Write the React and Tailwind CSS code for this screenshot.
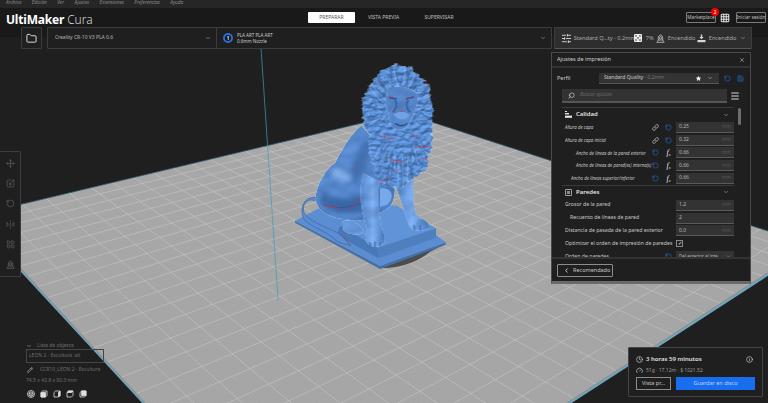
import { ChevronDown, ChevronLeft, Clock, Folder, Grid3x3, Info, Link, Menu, Move, Pencil, RotateCcw, Save, Search, SlidersHorizontal, Star, X, Scaling, FlipHorizontal2, LayoutGrid, Gauge } from 'lucide-react';

const PLATE = { a: [404, 113], r: [811, 245], b: [303, 574], l: [-28, 216] };
const MANE = 'M340 30C380 25 420 50 440 90C455 130 462 170 455 210C467 250 447 300 442 340C420 360 392 372 370 396C340 398 312 388 295 378C280 330 262 280 265 240C240 200 245 130 265 100C280 70 292 50 340 30Z';

const makeMapper = (p0, p1, p2, p3) => {
  const dx1 = p1[0] - p2[0];
  const dx2 = p3[0] - p2[0];
  const sx = p0[0] - p1[0] + p2[0] - p3[0];
  const dy1 = p1[1] - p2[1];
  const dy2 = p3[1] - p2[1];
  const sy = p0[1] - p1[1] + p2[1] - p3[1];
  const den = dx1 * dy2 - dx2 * dy1;
  const g = (sx * dy2 - dx2 * sy) / den;
  const h = (dx1 * sy - sx * dy1) / den;
  const a = p1[0] - p0[0] + g * p1[0];
  const b = p3[0] - p0[0] + h * p3[0];
  const d = p1[1] - p0[1] + g * p1[1];
  const e = p3[1] - p0[1] + h * p3[1];
  return (u, v) => {
    const w = g * u + h * v + 1;
    return [(a * u + b * v + p0[0]) / w, (d * u + e * v + p0[1]) / w];
  };
};

const mapPlate = makeMapper(PLATE.l, PLATE.a, PLATE.r, PLATE.b);

const gridLines = (count) => {
  const lines = [];
  for (let i = 1; i < count; i++) {
    const t = i / count;
    const a1 = mapPlate(t, 0);
    const a2 = mapPlate(t, 1);
    const b1 = mapPlate(0, t);
    const b2 = mapPlate(1, t);
    lines.push(`M${a1[0].toFixed(1)} ${a1[1].toFixed(1)}L${a2[0].toFixed(1)} ${a2[1].toFixed(1)}`);
    lines.push(`M${b1[0].toFixed(1)} ${b1[1].toFixed(1)}L${b2[0].toFixed(1)} ${b2[1].toFixed(1)}`);
  }
  return lines.join('');
};

// strands of the mane, fanned out from behind the face
const maneStrands = (step, phase) => {
  const parts = [];
  for (let a = phase; a < 360; a += step) {
    const rad = (a * Math.PI) / 180;
    const wob = Math.sin(a * 7.3) * 0.18;
    const r1 = 62 + Math.sin(a * 3.1) * 8;
    const r2 = 112 + Math.sin(a * 5.7) * 30;
    const cy = a > 20 && a < 160 ? 215 : 165;
    const sy = a > 20 && a < 160 ? 1.5 : 1.15;
    const x1 = 362 + Math.cos(rad) * r1;
    const y1 = cy + Math.sin(rad) * r1 * sy;
    const x2 = 362 + Math.cos(rad + wob) * r2 * 0.85;
    const y2 = cy + Math.sin(rad + wob) * r2 * sy;
    const cx = (x1 + x2) / 2 + wob * 30;
    const cyy = (y1 + y2) / 2 + 8;
    parts.push(`M${x1.toFixed(0)} ${y1.toFixed(0)}Q${cx.toFixed(0)} ${cyy.toFixed(0)} ${x2.toFixed(0)} ${y2.toFixed(0)}`);
  }
  return parts.join('');
};

function SurfaceFilter({ id, freq, octaves = 3, seed, height, shift = 0, spec = 0.35 }) {
  return (
    <filter id={id} x="-0.1" y="-0.1" width="1.2" height="1.2" colorInterpolationFilters="sRGB">
      <feTurbulence type="fractalNoise" baseFrequency={freq} numOctaves={octaves} seed={seed} result="n" />
      <feDisplacementMap in="SourceGraphic" in2="n" scale={shift} xChannelSelector="R" yChannelSelector="G" result="d" />
      <feDiffuseLighting in="n" surfaceScale={height} diffuseConstant="1.12" lightingColor="#ffffff" result="l">
        <feDistantLight azimuth="250" elevation="60" />
      </feDiffuseLighting>
      <feBlend in="l" in2="d" mode="multiply" result="m" />
      <feSpecularLighting in="n" surfaceScale={height} specularConstant={spec} specularExponent="30" lightingColor="#cfe2ff" result="s">
        <feDistantLight azimuth="250" elevation="60" />
      </feSpecularLighting>
      <feComposite in="m" in2="s" operator="arithmetic" k1="0" k2="1" k3="0.6" k4="0" result="lit" />
      <feComposite in="lit" in2="d" operator="in" />
    </filter>
  );
}

function Lion() {
  return (
    <g transform="translate(280 55) scale(0.3333)">
      <path d="M300 640C350 640 410 625 450 590L497 566L300 640Z" fill="#4c4c4c" />
      <path d="M45 497L300 632L497 562L497 569L300 642L45 503Z" fill="#4470ab" />
      <path d="M45 497L132 452L350 452L497 562L300 632Z" fill="#5a8dd2" />
      <path d="M292 578L468 520L468 548L296 610Z" fill="#4f7fbf" />
      <path d="M132 450L350 452L468 520L292 578Z" fill="#5f94d8" />
      <path d="M180 512L292 578L296 610L170 540Z" fill="#4878b8" />
      <path d="M122 448C88 418 64 445 72 472C84 498 130 512 170 532C186 540 196 556 212 572C196 566 176 566 168 556C140 528 84 512 72 492C54 458 78 412 122 432Z" fill="#5a8dd4" stroke="#3a659f" strokeWidth="2" />

      <g filter="url(#bump)">
        <path d="M245 210C205 245 180 295 165 325C130 345 112 390 105 432C112 468 150 492 200 492C240 510 290 480 330 455C360 420 340 330 300 280Z" fill="url(#bodyShade)" />
        <path d="M188 500C210 488 240 505 252 530C240 545 205 540 190 525Z" fill="#6497dc" />
      </g>
      <g filter="url(#soft)">
        <path d="M255 260C225 300 210 340 222 385C250 350 268 310 275 270Z" fill="#36609c" opacity="0.6" />
        <path d="M125 405C160 440 215 440 262 420L250 470C200 480 150 470 120 440Z" fill="#2f5793" opacity="0.6" />
        <path d="M150 345C175 335 205 350 215 375C190 385 165 375 150 345Z" fill="#9cc3f5" opacity="0.6" />
      </g>
      <path d="M128 448C165 462 205 462 250 442" fill="none" stroke="#2b4f88" strokeWidth="3" opacity="0.5" />
      <path d="M300 400C340 395 345 430 320 450L300 455Z" fill="#76a8ea" />
      <g filter="url(#bump)">
        <path d="M250 355C240 400 235 440 262 525C250 545 255 572 285 576C315 575 325 555 305 520C296 470 288 430 298 380Z" fill="url(#legShade)" />
        <path d="M345 385C360 430 372 470 388 512C395 530 430 532 448 518C450 500 425 490 408 478C398 440 400 410 400 375Z" fill="url(#legShade)" />
      </g>
      <path d="M268 562L272 574M285 560L285 576M300 560L300 573M402 510L404 526M420 510L422 528" stroke="#35609c" strokeWidth="3" />

      <path d={MANE} fill="#5286cc" filter="url(#mane)" />
      <g clipPath="url(#maneClip)">
        <path d={maneStrands(9, 0)} stroke="#2f5894" strokeWidth="5" fill="none" strokeLinecap="round" opacity="0.5" />
        <path d={maneStrands(13, 5)} stroke="#a9cbf7" strokeWidth="2.5" fill="none" strokeLinecap="round" opacity="0.6" />
      </g>

      <path d="M325 100C350 88 395 95 412 118C420 150 395 190 385 210C378 226 345 228 335 212C325 190 310 140 325 100Z" fill="#5283c8" filter="url(#bump)" />
      <path d="M345 135C355 150 345 165 338 172M385 135C375 150 382 165 392 172" fill="none" stroke="#36609c" strokeWidth="5" />
      <path d="M328 128L350 132M378 132L402 126" stroke="#2c538e" strokeWidth="5" />
      <path d="M340 178C355 166 378 168 388 180C382 198 350 198 340 178Z" fill="#6fa2e6" />
      <path d="M345 205C358 214 372 214 382 205" fill="none" stroke="#2a4f8a" strokeWidth="4" />
      <path d="M295 85L300 90M325 125L340 128M385 130L398 128M342 172L352 170M362 170L375 166M300 245L340 252M395 245L412 242M405 278L445 275M330 315L370 318M340 345L352 350M300 378L330 372M130 452L180 460M205 468L245 428M440 85L445 90M425 310L440 315M215 340L222 348" stroke="#e03040" strokeWidth="3" fill="none" strokeDasharray="7 4" />
      <path d="M185 540L215 572" stroke="#e03040" strokeWidth="1.5" fill="none" />
    </g>
  );
}

function Scene() {
  return (
    <svg className="absolute inset-0" width="768" height="403" viewBox="0 0 768 403">
      <defs>
        <clipPath id="plateClip">
          <polygon points={`${PLATE.l} ${PLATE.a} ${PLATE.r} ${PLATE.b}`} />
        </clipPath>
        <clipPath id="maneClip">
          <path d={MANE} />
        </clipPath>
        <linearGradient id="bodyShade" x1="0" y1="0" x2="1" y2="1">
          <stop offset="0" stopColor="#5d90d8" />
          <stop offset="1" stopColor="#4577bb" />
        </linearGradient>
        <linearGradient id="legShade" x1="0" y1="0" x2="1" y2="0">
          <stop offset="0" stopColor="#4f82c8" />
          <stop offset="0.5" stopColor="#78aaee" />
          <stop offset="1" stopColor="#4375b8" />
        </linearGradient>
        <SurfaceFilter id="mane" freq="0.05 0.07" octaves={3} seed={5} height={3} shift={22} spec={0.25} />
        <SurfaceFilter id="bump" freq="0.02" octaves={2} seed={8} height={2.5} shift={5} spec={0.12} />
        <filter id="soft" x="-0.2" y="-0.2" width="1.4" height="1.4">
          <feGaussianBlur stdDeviation="7" />
        </filter>
      </defs>

      <polygon points={`${PLATE.l} ${PLATE.r} 811 248 303 577 -28 219`} fill="#6fa6bd" />
      <polygon points={`${PLATE.l} ${PLATE.a} ${PLATE.r} ${PLATE.b}`} fill="#a5a5a5" />
      <g clipPath="url(#plateClip)">
        <path d={gridLines(240)} stroke="#b2b2b2" strokeWidth="0.3" opacity="0.55" fill="none" />
        <path d={gridLines(24)} stroke="#c2c2c2" strokeWidth="0.7" fill="none" />
      </g>
      <path d={`M${PLATE.l}L${PLATE.a}L${PLATE.r}`} stroke="#27566a" strokeWidth="0.8" fill="none" />
      <path d={`M${PLATE.l}L${PLATE.b}L${PLATE.r}`} stroke="#8a8a8a" strokeWidth="1" fill="none" />
      <path d="M261 48L278 300" stroke="#3f9bc0" strokeWidth="0.7" />
      <Lion />
    </svg>
  );
}

function Label({ children, indent = 'pl-[3px]', italic = false }) {
  return (
    <span className={`flex-1 whitespace-nowrap text-[#c8c8c8] ${indent} ${italic ? 'text-[4.4px] italic' : 'text-[5.2px]'}`}>{children}</span>
  );
}

function Fx() {
  return (
    <span className="flex w-[7px] items-end justify-center leading-none italic text-[#e8e8e8] [font-family:'Liberation_Serif',serif]">
      <span className="text-[8px]">f</span>
      <span className="text-[4px]">x</span>
    </span>
  );
}

function Blue() {
  return <RotateCcw size={7} strokeWidth={2} className="text-[#2a6fd6]" />;
}

function Field({ value, unit = 'mm' }) {
  return (
    <div className="flex h-[11px] w-[58px] items-center justify-between border-b border-[#5a5a5a] bg-[#333333] px-[3px] text-[5px]">
      <span className="text-[#b5b5b5]">{value}</span>
      <span className="text-[#555555]">{unit}</span>
    </div>
  );
}

function LinkedRow({ label, value }) {
  return (
    <div className="flex h-[12.8px] items-center">
      <Label italic>{label}</Label>
      <div className="flex items-center gap-[6px] pr-[4px]">
        <Link size={7} className="text-[#e0e0e0]" />
        <Blue />
      </div>
      <Field value={value} />
    </div>
  );
}

function FnRow({ label, value, indent }) {
  return (
    <div className="flex h-[12.8px] items-center">
      <Label italic indent={indent}>{label}</Label>
      <div className="flex items-center gap-[6px] pr-[4px]">
        <Blue />
        <Fx />
      </div>
      <Field value={value} />
    </div>
  );
}

function PlainRow({ label, value, unit, indent }) {
  return (
    <div className="flex h-[12.8px] items-center">
      <Label indent={indent}>{label}</Label>
      <Field value={value} unit={unit} />
    </div>
  );
}

function SectionHead({ icon, title }) {
  return (
    <div className="flex h-[14px] items-center gap-[4px] border-t border-[#3a3a3a] pl-[3px] pr-[4px] text-[6px] font-semibold text-[#e4e4e4]">
      {icon}
      <span className="flex-1">{title}</span>
      <ChevronDown size={6} className="mr-[1px] text-[#bdbdbd]" />
    </div>
  );
}

function QualityIcon() {
  return (
    <svg width="7" height="7" viewBox="0 0 7 7" fill="#e4e4e4">
      <rect x="0" y="0" width="2" height="1" />
      <rect x="0" y="2" width="4" height="1.4" />
      <rect x="0" y="4.6" width="7" height="2.2" />
    </svg>
  );
}

function WallIcon() {
  return (
    <svg width="7" height="7" viewBox="0 0 7 7">
      <rect x="0.4" y="0.4" width="6.2" height="6.2" rx="0.8" fill="none" stroke="#d8d8d8" strokeWidth="0.8" />
      <rect x="2" y="2" width="3" height="3" fill="#8a8a8a" />
    </svg>
  );
}

function SettingsPanel() {
  return (
    <section className="absolute left-[551px] top-[52px] flex h-[232px] w-[200px] flex-col border border-[#4a4a4a] border-b-[3px] border-b-[#6a6a6a] bg-[#1f1f1f]">
      <div className="flex h-[15px] shrink-0 items-center justify-between border-b-2 border-[#333333] pl-[5px] pr-[5px] text-[5.5px] text-[#d0d0d0]">
        <span>Ajustes de impresión</span>
        <X size={6} className="text-[#d8d8d8]" />
      </div>
      <div className="mt-[5px] flex h-[11px] shrink-0 items-center pl-[5px] text-[5.5px] text-[#c8c8c8]">
        <span className="w-[42px]">Perfil</span>
        <div className="flex h-[11px] w-[120px] items-center border-b border-[#555555] bg-[#333333] pl-[5px] pr-[6px] text-[5px]">
          <span className="flex-1 text-[#c8c8c8]">Standard Quality <span className="text-[#777777]">- 0.2mm</span></span>
          <Star size={5} className="mr-[6px] fill-white text-white" />
          <ChevronDown size={6} className="text-[#c8c8c8]" />
        </div>
        <div className="ml-[5px] flex items-center gap-[6px]">
          <RotateCcw size={7} strokeWidth={2} className="text-[#2a6fd6]" />
          <Save size={7} strokeWidth={2} className="text-[#2a6fd6]" />
        </div>
      </div>
      <div className="mt-[5px] flex h-[14px] shrink-0 items-center pl-[10px]">
        <div className="flex h-[14px] w-[165px] items-center gap-[5px] border-b-2 border-[#555555] bg-[#333333] pl-[6px] text-[5px] italic text-[#666666]">
          <Search size={7} className="-scale-x-100 text-[#e4e4e4]" />
          <span>Buscar ajustes</span>
        </div>
        <Menu size={10} strokeWidth={2.5} className="ml-[3px] text-[#d8d8d8]" />
      </div>
      <div className="relative mt-[4px] min-h-0 flex-1 overflow-hidden pl-[10px] pr-[16px]">
        <SectionHead icon={<QualityIcon />} title="Calidad" />
        <LinkedRow label="Altura de capa" value="0.25" />
        <LinkedRow label="Altura de capa inicial" value="0.32" />
        <FnRow label="Ancho de líneas de la pared exterior" value="0.66" indent="pl-[14px]" />
        <FnRow label="Ancho de líneas de pared(es) interna(s)" value="0.66" indent="pl-[14px]" />
        <FnRow label="Ancho de líneas superior/inferior" value="0.66" indent="pl-[9px]" />
        <SectionHead icon={<WallIcon />} title="Paredes" />
        <PlainRow label="Grosor de la pared" value="1.2" />
        <PlainRow label="Recuento de líneas de pared" value="2" unit="" indent="pl-[8px]" />
        <PlainRow label="Distancia de pasada de la pared exterior" value="0.0" />
        <div className="flex h-[12.8px] items-center">
          <Label>Optimizar el orden de impresión de paredes</Label>
          <div className="flex w-[58px]">
            <div className="flex h-[7px] w-[7px] items-center justify-center border border-[#8a8a8a] text-[5px] leading-none text-white">✓</div>
          </div>
        </div>
        <div className="flex h-[12.8px] items-center">
          <Label>Orden de paredes</Label>
          <span className="pr-[4px]"><Blue /></span>
          <div className="flex h-[11px] w-[58px] items-center justify-between whitespace-nowrap bg-[#333333] px-[3px] text-[4.5px] text-[#b5b5b5]">
            <span>Del exterior al inte...</span>
            <ChevronDown size={5} />
          </div>
        </div>
        <div className="absolute right-[9px] top-[1px] h-[17px] w-[3px] rounded-full bg-[#6e6e6e]" />
      </div>
      <div className="flex h-[24px] shrink-0 items-center border-t-2 border-[#333333] pl-[5px]">
        <button className="flex h-[13px] w-[56px] items-center gap-[3px] rounded-[1px] border border-[#8c8c8c] pl-[5px] text-[5.5px] text-[#c8c8c8]">
          <ChevronLeft size={7} strokeWidth={3} className="text-[#e0e0e0]" />
          Recomendado
        </button>
      </div>
    </section>
  );
}

function PrintSummary() {
  return (
    <section className="absolute left-[628px] top-[347px] flex h-[50px] w-[135px] flex-col rounded-[1px] border border-[#454545] bg-[#1f1f1f] px-[7px] pt-[6px]">
      <div className="flex h-[10px] items-center text-[6px] font-semibold text-[#e0e0e0]">
        <Clock size={7} className="mr-[3px] text-[#e0e0e0]" />
        <span className="flex-1">3 horas 59 minutos</span>
        <Info size={7} className="mr-[2px] text-[#e0e0e0]" />
      </div>
      <div className="mt-[2px] flex h-[9px] items-center text-[5px] text-[#9a9a9a]">
        <Gauge size={7} className="mr-[3px] text-[#e0e0e0]" />
        <span>51g · 17.12m · $ 1021.52</span>
      </div>
      <div className="mt-[2px] flex gap-[5px]">
        <button className="h-[13px] w-[35px] border border-[#8c8c8c] text-[5.5px] text-[#c8c8c8]">Vista pr...</button>
        <button className="h-[13px] w-[79px] bg-[#196ef0] text-[5.5px] text-[#bcd4f8]">Guardar en disco</button>
      </div>
    </section>
  );
}

function LionToolIcon() {
  return (
    <svg width="9" height="9" viewBox="0 0 9 9" fill="none" stroke="#5a5a5a" strokeWidth="0.9">
      <path d="M2.5 6C1.6 3.5 3 1 4.5 1S7.4 3.5 6.5 6" />
      <circle cx="4.5" cy="4" r="1.2" />
      <path d="M0.8 8.2L2.5 6H6.5L8.2 8.2Z" />
    </svg>
  );
}

function SideTools() {
  const icons = [Move, Scaling, RotateCcw, FlipHorizontal2, LayoutGrid];
  return (
    <nav className="absolute left-[-1px] top-[151px] flex h-[126px] w-[22px] flex-col items-center justify-around rounded-r-[1px] border border-[#3c3c3c] bg-[#1f1f1f] py-[1px]">
      {icons.map((Icon, i) => (
        <Icon key={i} size={9} className="text-[#5a5a5a]" />
      ))}
      <LionToolIcon />
    </nav>
  );
}

function CubeIcon({ face }) {
  return (
    <svg width="8" height="8" viewBox="0 0 8 8" fill="none" stroke="#e0e0e0" strokeWidth="0.8">
      {face === 'iso' ? (
        <>
          <circle cx="4" cy="4" r="3.5" />
          <path d="M4 1.8L6 3V5.2L4 6.3L2 5.2V3ZM4 4.2V6.3M2 3L4 4.2L6 3" />
        </>
      ) : (
        <>
          <path d="M1 2.5L2.6 1H7V5.5L5.5 7H1Z" />
          {face === 'front' && <path d="M1 2.5H5.5V7H1Z" fill="#e0e0e0" />}
          {face === 'side' && <path d="M5.5 2.5L7 1V5.5L5.5 7Z" fill="#e0e0e0" />}
          {face === 'top' && <path d="M1 2.5L2.6 1H7L5.5 2.5Z" fill="#e0e0e0" />}
          {face === 'back' && <path d="M2.6 1H7V5.5H2.6Z" fill="#e0e0e0" />}
        </>
      )}
    </svg>
  );
}

function ObjectList() {
  return (
    <section className="absolute left-[26px] top-[342px] w-[78px] text-[5px] text-[#6e6e6e]">
      <div className="flex h-[7px] items-center">
        <ChevronDown size={6} className="mr-[5px] text-[#b0b0b0]" />
        <span>Lista de objetos</span>
      </div>
      <div className="flex h-[14px] items-center border border-[#454545] pl-[2px]">LEON 2 - Escultura .stl</div>
      <div className="mt-[3px] flex h-[8px] items-center whitespace-nowrap">
        <Pencil size={6} className="mr-[7px] ml-[1px] text-[#d0d0d0]" />
        <span>CCR10_LEON 2 - Escultura</span>
      </div>
      <div className="mt-[3px] h-[7px] leading-[7px]">74.5 x 43.9 x 90.0 mm</div>
      <div className="mt-[6px] flex gap-[5px] pl-[1px]">
        <CubeIcon face="iso" />
        <CubeIcon face="front" />
        <CubeIcon face="side" />
        <CubeIcon face="top" />
        <CubeIcon face="back" />
      </div>
    </section>
  );
}

function InfillIcon() {
  return (
    <svg width="8" height="8" viewBox="0 0 8 8" fill="#2e2e2e">
      <rect width="8" height="8" rx="1" fill="#ececec" />
      <circle cx="2" cy="2" r="0.8" />
      <circle cx="6" cy="2" r="0.8" />
      <circle cx="4" cy="4" r="0.8" />
      <circle cx="2" cy="6" r="0.8" />
      <circle cx="6" cy="6" r="0.8" />
    </svg>
  );
}

function SupportIcon() {
  return (
    <svg width="9" height="9" viewBox="0 0 9 9" fill="none" stroke="#d8d8d8" strokeWidth="0.7">
      <path d="M2.4 6C1.6 3.5 3 1 4.5 1S7.4 3.5 6.6 6" />
      <circle cx="4.5" cy="3.8" r="1.2" />
      <path d="M0.8 8.3L2.4 6H6.6L8.2 8.3Z" />
    </svg>
  );
}

function AdhesionIcon() {
  return (
    <svg width="9" height="9" viewBox="0 0 9 9" fill="#d8d8d8">
      <path d="M3.8 0.5H5.2V3H6.6L4.5 5.2L2.4 3H3.8Z" />
      <rect x="0.5" y="6" width="8" height="2.2" />
    </svg>
  );
}

function TopBars() {
  return (
    <header className="absolute inset-x-0 top-0">
      <div className="flex h-[8px] gap-[10.5px] overflow-hidden bg-[#262626] pl-[6px] text-[4.7px] leading-[4px] italic text-[#8a8a8a]">
        <span>Archivo</span>
        <span>Edición</span>
        <span>Ver</span>
        <span>Ajustes</span>
        <span>Extensiones</span>
        <span>Preferencias</span>
        <span>Ayuda</span>
      </div>
      <div className="relative h-[29px] bg-[#191919]">
        <div className="absolute left-[6px] top-[3px] flex items-baseline gap-[3px] text-[12px] leading-[17px] text-white">
          <span className="font-bold tracking-[-0.2px]">UltiMaker</span>
          <span className="font-light text-[#d8d8d8]">Cura</span>
        </div>
        <div className="absolute left-[308px] top-[4px] flex h-[11px] items-center text-[5px] text-[#c0c0c0]">
          <span className="flex h-[11px] w-[47px] items-center justify-center rounded-[1px] bg-white text-[#555555]">PREPARAR</span>
          <span className="ml-[12px] w-[33px] text-center">VISTA PREVIA</span>
          <span className="ml-[23px] w-[32px] text-center">SUPERVISAR</span>
        </div>
        <div className="absolute left-[686px] top-[4px] flex items-center whitespace-nowrap text-[4.7px] text-[#c0c0c0]">
          <span className="flex h-[11px] w-[30px] items-center justify-center rounded-[1px] border border-[#7a7a7a]">Marketplace</span>
          <Grid3x3 size={10} strokeWidth={2.5} className="ml-[4px] text-[#e0e0e0]" />
          <span className="ml-[6px] flex h-[11px] w-[30px] items-center justify-center rounded-[1px] border border-[#7a7a7a]">Iniciar sesión</span>
          <span className="absolute left-[25px] top-[-4px] flex h-[8px] w-[8px] items-center justify-center rounded-full bg-[#f00000] text-[4.5px] text-white">2</span>
        </div>
      </div>
      <div className="absolute left-[21px] top-[27px] flex h-[22px] w-[731px] gap-[5px]">
        <div className="flex w-[21px] items-center justify-center rounded-[1px] border border-[#3c3c3c] bg-[#1f1f1f]">
          <Folder size={11} className="text-[#ececec]" />
        </div>
        <div className="flex w-[507px] rounded-[1px] border border-[#3c3c3c] bg-[#1f1f1f] text-[5px] text-[#b8b8b8]">
          <div className="flex w-[168px] items-center justify-between pl-[7px] pr-[5px]">
            <span>Creality CR-10 V3 PLA 0.6</span>
            <ChevronDown size={6} />
          </div>
          <div className="flex flex-1 items-center border-l border-[#3c3c3c] pl-[6px] pr-[5px]">
            <span className="mr-[4px] flex h-[10px] w-[10px] items-center justify-center rounded-full border-[2px] border-[#2a6fd6] bg-[#111111] text-[4.5px] font-bold text-white">1</span>
            <div className="flex-1 text-[4.5px] leading-[6px] text-[#cccccc]">
              <div>PLA ART PLA ART</div>
              <div>0.6mm Nozzle</div>
            </div>
            <ChevronDown size={6} />
          </div>
        </div>
        <div className="-ml-[3px] flex w-[199px] items-center whitespace-nowrap rounded-[1px] border border-[#3c3c3c] border-b-[#555555] bg-[#2e2e2e] pl-[6px] pr-[5px] text-[5.6px] text-[#a8a8a8]">
          <SlidersHorizontal size={11} className="mr-[2px] text-[#d8d8d8]" />
          <span className="w-[60px]">Standard Q...ty - 0.2mm</span>
          <span className="mr-[4px]"><InfillIcon /></span>
          <span className="w-[10px]">7%</span>
          <span className="mr-[3px]"><SupportIcon /></span>
          <span className="w-[29px]">Encendido</span>
          <span className="mr-[3px]"><AdhesionIcon /></span>
          <span className="flex-1">Encendido</span>
          <ChevronDown size={6} className="text-[#c0c0c0]" />
        </div>
      </div>
    </header>
  );
}

export default function App() {
  return (
    <div className="relative h-[403px] w-[768px] overflow-hidden bg-[#1f1f1f] [font-family:'Noto_Sans',sans-serif]">
      <Scene />
      <TopBars />
      <SideTools />
      <ObjectList />
      <SettingsPanel />
      <PrintSummary />
    </div>
  );
}
